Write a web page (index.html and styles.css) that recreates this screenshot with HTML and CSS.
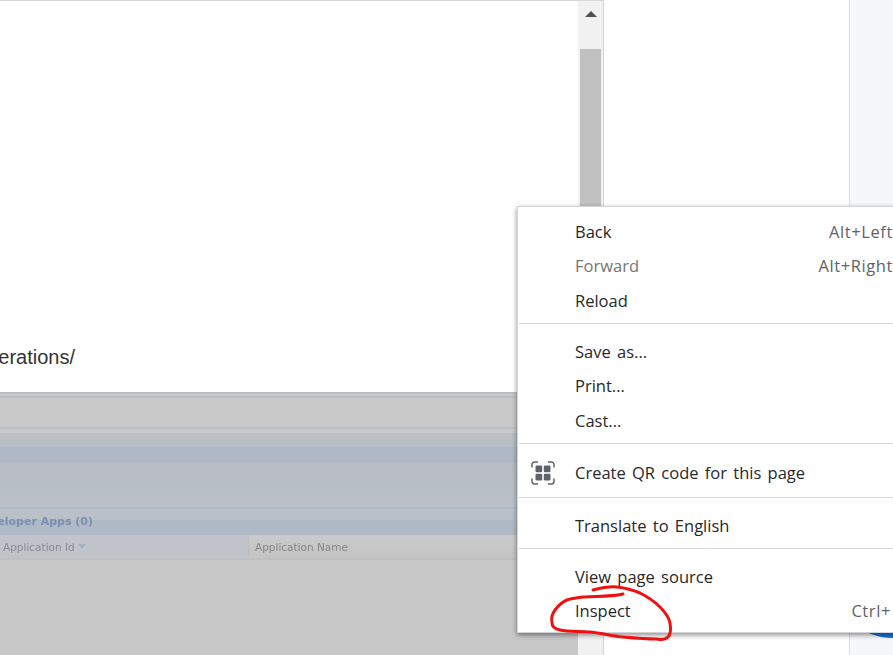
FILE: index.html
```html
<!DOCTYPE html>
<html lang="en">
<head>
<meta charset="utf-8">
<title>Inspect</title>
<link rel="stylesheet" href="styles.css">
</head>
<body>
<div class="page">
  <div class="main">
    <div class="content">
      <div class="url-pane"><span class="url-text">https://example.com/operations/</span></div>
      <div class="dim">
        <div class="band band-line"></div>
        <div class="band band-plain"></div>
        <div class="band band-line band-thin"></div>
        <div class="band band-gap"></div>
        <div class="band band-head"></div>
        <div class="band band-body"></div>
        <div class="band band-title"><span class="title-text">Developer Apps (0)</span></div>
        <div class="table-head">
          <div class="cell cell-id"><span class="cell-text">Application Id</span><span class="sort"></span></div>
          <div class="cell cell-name"><span class="cell-text">Application Name</span></div>
        </div>
      </div>
    </div>
    <div class="scrollbar">
      <div class="arrow-box"><span class="arrow"></span></div>
      <div class="thumb"></div>
    </div>
  </div>
  <div class="middle"></div>
  <div class="side"></div>
</div>
<div class="fab"></div>
<div class="menu">
  <div class="item"><span class="lead"></span><span class="label">Back</span><span class="key">Alt+Left</span></div>
  <div class="item item-off"><span class="lead"></span><span class="label">Forward</span><span class="key">Alt+Right</span></div>
  <div class="item"><span class="lead"></span><span class="label">Reload</span></div>
  <div class="sep"></div>
  <div class="item"><span class="lead"></span><span class="label">Save as...</span></div>
  <div class="item"><span class="lead"></span><span class="label">Print...</span></div>
  <div class="item"><span class="lead"></span><span class="label">Cast...</span></div>
  <div class="sep"></div>
  <div class="item item-qr">
    <span class="lead">
      <svg class="qr" viewBox="0 0 24 24" width="24" height="24" aria-hidden="true">
        <path class="qr-frame" d="M1 6.5V3.5A2.5 2.5 0 0 1 3.5 1H7M17 1h3.500A2.500 2.500 0 0 1 23 3.500V6.500M23 17.500v3A2.500 2.500 0 0 1 20.500 23H17M7 23H3.500A2.500 2.500 0 0 1 1 20.500V17.500"/>
        <rect class="qr-dot" x="4.500" y="4.500" width="6.700" height="6.700" rx="1.300"/>
        <rect class="qr-dot" x="12.800" y="4.500" width="6.700" height="6.700" rx="1.300"/>
        <rect class="qr-dot" x="4.500" y="12.800" width="6.700" height="6.700" rx="1.300"/>
        <rect class="qr-dot" x="12.800" y="12.800" width="6.700" height="6.700" rx="1.300"/>
      </svg>
    </span>
    <span class="label">Create QR code for this page</span>
  </div>
  <div class="sep"></div>
  <div class="item"><span class="lead"></span><span class="label">Translate to English</span></div>
  <div class="sep"></div>
  <div class="item item-tight"><span class="lead"></span><span class="label">View page source</span></div>
  <div class="item"><span class="lead"></span><span class="label">Inspect</span><span class="key key-inspect">Ctrl+</span></div>
</div>
<svg class="scribble" viewBox="0 0 893 655" width="893" height="655" aria-hidden="true">
  <path d="M593 590C601 588 609 586 617 587C626 588 633 590 640 593C648 597 655 602 660 607C665 612 669 617 670 623C671 629 671 634 668 637C665 640 661 640 657 639C646 639 634 638 623 637C612 636 601 633 590 632C580 631 569 632 560 630C555 629 552 627 552 623C551 618 552 614 555 610C558 606 562 602 567 600C572 598 577 598 583 597C596 596 610 597 623 594"/>
</svg>
</body>
</html>
```
FILE: styles.css
```css
html, body {
  margin: 0;
  padding: 0;
  height: 655px;
  overflow: hidden;
  background: #fff;
}

.page {
  display: flex;
  height: 655px;
}

.main {
  display: flex;
  flex: 0 0 604px;
  box-sizing: border-box;
  border-right: 1px solid #d4d4d4;
  border-top: 1px solid #d8d8d8;
}

.content {
  display: flex;
  flex-direction: column;
  flex: 0 0 578px;
  min-width: 0;
}

.url-pane {
  display: flex;
  justify-content: flex-end;
  align-items: flex-end;
  box-sizing: border-box;
  height: 391px;
  width: 75px;
  padding-bottom: 23px;
  white-space: nowrap;
  flex: none;
}

.url-text {
  flex: none;
  font: 20px/24px "Liberation Sans", Arial, sans-serif;
  color: #333;
}

.dim {
  flex: 1;
  background: #c8c8c8;
  box-shadow: inset 0 3px 2px -2px #b8b8b8;
}

.band-line {
  height: 6px;
  box-sizing: border-box;
  border-bottom: 2px solid #b6c0cd;
}

.band-plain {
  height: 29px;
  background: #c9c9c9;
}

.band-thin {
  height: 2px;
  border-bottom: 2px solid #b6c0cd;
}

.band-gap {
  height: 4px;
  border-bottom: 1px solid #bcbcbc;
  background: #c9c9c9;
}

.band-head {
  height: 28px;
  background: linear-gradient(#bcc1c7 0, #b7bdc5 46%, #aeb7c4 47%, #b0b9c5 96%, #a9b5c6 100%);
}

.band-body {
  height: 47px;
  background: linear-gradient(#b7bcc3, #bbc1c8);
  border-bottom: 2px solid #afbac8;
  box-sizing: border-box;
}

.band-title {
  display: flex;
  align-items: center;
  justify-content: flex-end;
  box-sizing: border-box;
  width: 93px;
  height: 26px;
  white-space: nowrap;
  position: relative;
}

.band-title::before {
  content: "";
  position: absolute;
  left: 0;
  top: 0;
  bottom: 0;
  width: 578px;
  background: linear-gradient(#bac1c8 0, #b8c0c8 42%, #afb9c6 43%, #b0bac7 100%);
}

.title-text {
  position: relative;
  flex: none;
  font: bold 11px/16px "DejaVu Sans", sans-serif;
  color: #7c8fae;
  filter: blur(0.3px);
}

.table-head {
  display: flex;
  height: 25px;
  box-sizing: border-box;
  border-bottom: 2px solid #bfbfbf;
}

.cell {
  display: flex;
  align-items: center;
  height: 23px;
  font: 10.500px/14px "DejaVu Sans", sans-serif;
  color: #888c92;
}

.cell-text {
  filter: blur(0.3px);
}

.cell-id {
  flex: 0 0 248px;
  box-sizing: border-box;
  padding-left: 3px;
  background: linear-gradient(#c1c5ca, #bfc4ca);
}

.cell-name {
  flex: 1;
  padding-left: 6px;
  border-left: 1px solid #bdbdbd;
  background: linear-gradient(#cacaca, #c4c4c4);
  color: #868686;
}

.sort {
  width: 0;
  height: 0;
  margin-left: 3px;
  border-left: 4px solid transparent;
  border-right: 4px solid transparent;
  border-top: 5px solid #a5b1c4;
}

.scrollbar {
  flex: 1;
  display: flex;
  flex-direction: column;
  box-sizing: border-box;
  padding: 0 2px;
  background: #f1f1f1;
}

.arrow-box {
  display: flex;
  justify-content: center;
  height: 48px;
  padding-top: 10px;
  box-sizing: border-box;
  flex: none;
}

.arrow {
  width: 0;
  height: 0;
  border-left: 6px solid transparent;
  border-right: 6px solid transparent;
  border-bottom: 6px solid #505050;
}

.thumb {
  height: 400px;
  background: #c0c0c0;
  flex: none;
}

.middle {
  flex: 0 0 245px;
  background: #fff;
}

.side {
  flex: 1;
  background: #f6f7f9;
  border-left: 1px solid #dcdee3;
}

.fab {
  position: absolute;
  left: 833px;
  top: 518px;
  width: 120px;
  height: 120px;
  border-radius: 50%;
  background: #1a73e8;
}

.menu {
  position: absolute;
  left: 517px;
  top: 206px;
  width: 420px;
  box-sizing: border-box;
  padding: 7.800px 0 3.500px;
  background: #fff;
  border: 1px solid #d4d4d8;
  box-shadow: 0 2px 5px rgba(0, 0, 0, 0.45);
  font: 16.500px/34.500px "Open Sans", "Noto Sans", sans-serif;
  word-spacing: 2px;
  color: #26282b;
}

.item {
  display: flex;
  align-items: center;
  height: 34.500px;
  padding: 0 43px 0 13px;
}

.item-qr {
  height: 36px;
  padding-bottom: 2px;
}

.item-tight {
  height: 33.500px;
}

.item-off .label {
  color: #757575;
}

.lead {
  display: flex;
  align-items: center;
  flex: 0 0 24px;
  margin-right: 20px;
}

.label {
  flex: 1;
  white-space: nowrap;
}

.key {
  color: #5f6368;
  white-space: nowrap;
  letter-spacing: 0.6px;
}

.key-inspect {
  margin-right: 2px;
}

.sep {
  height: 1px;
  margin: 4.500px 0 11px 1px;
  background: #dadada;
}

.qr-frame {
  fill: none;
  stroke: #5f6368;
  stroke-width: 1.500;
}

.qr-dot {
  fill: #5f6368;
}

.scribble {
  position: absolute;
  left: 0;
  top: 0;
  pointer-events: none;
}

.scribble path {
  fill: none;
  stroke: #f01010;
  stroke-width: 3;
  stroke-linecap: round;
  stroke-linejoin: round;
}
```
